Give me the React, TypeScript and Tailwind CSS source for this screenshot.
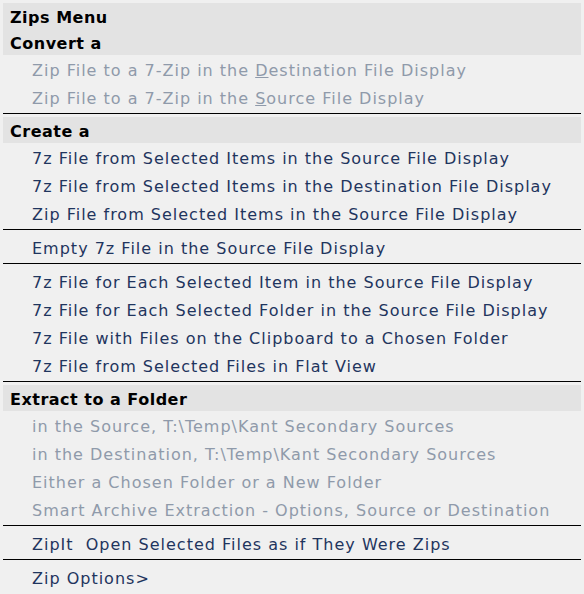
type Item =
  | { kind: 'header'; text: string }
  | { kind: 'item'; text: React.ReactNode; disabled?: boolean }
  | { kind: 'sep' };

const items: Item[] = [
  { kind: 'header', text: 'Zips Menu' },
  { kind: 'header', text: 'Convert a' },
  {
    kind: 'item',
    disabled: true,
    text: (
      <>
        Zip File to a 7-Zip in the <span className="underline">D</span>estination File Display
      </>
    ),
  },
  {
    kind: 'item',
    disabled: true,
    text: (
      <>
        Zip File to a 7-Zip in the <span className="underline">S</span>ource File Display
      </>
    ),
  },
  { kind: 'sep' },
  { kind: 'header', text: 'Create a' },
  { kind: 'item', text: '7z File from Selected Items in the Source File Display' },
  { kind: 'item', text: '7z File from Selected Items in the Destination File Display' },
  { kind: 'item', text: 'Zip File from Selected Items in the Source File Display' },
  { kind: 'sep' },
  { kind: 'item', text: 'Empty 7z File in the Source File Display' },
  { kind: 'sep' },
  { kind: 'item', text: '7z File for Each Selected Item in the Source File Display' },
  { kind: 'item', text: '7z File for Each Selected Folder in the Source File Display' },
  { kind: 'item', text: '7z File with Files on the Clipboard to a Chosen Folder' },
  { kind: 'item', text: '7z File from Selected Files in Flat View' },
  { kind: 'sep' },
  { kind: 'header', text: 'Extract to a Folder' },
  { kind: 'item', disabled: true, text: 'in the Source, T:\\Temp\\Kant Secondary Sources' },
  { kind: 'item', disabled: true, text: 'in the Destination, T:\\Temp\\Kant Secondary Sources' },
  { kind: 'item', disabled: true, text: 'Either a Chosen Folder or a New Folder' },
  { kind: 'item', disabled: true, text: 'Smart Archive Extraction - Options, Source or Destination' },
  { kind: 'sep' },
  { kind: 'item', text: 'ZipIt\u00a0 Open Selected Files as if They Were Zips' },
  { kind: 'sep' },
  { kind: 'item', text: 'Zip Options>' },
];

export default function App() {
  return (
    <div className="w-[584px] h-[594px] bg-[#f0f0f0] pt-[3px] pl-[3px] pr-[3px] font-['DejaVu_Sans',Verdana,sans-serif] text-[16px] overflow-hidden">
      {items.map((it, i) => {
        if (it.kind === 'header') {
          return (
            <div key={i} className="h-[26px] flex items-center pt-[4px] pl-[7px] bg-[#e3e3e3] font-bold tracking-[0.5px] text-black">
              <span>{it.text}</span>
            </div>
          );
        }
        if (it.kind === 'sep') {
          return (
            <div key={i} className="pt-[2px] pb-[3px]">
              <div className="h-px bg-black" />
            </div>
          );
        }
        return (
          <div
            key={i}
            className={`h-[28px] flex items-center pt-[4px] pl-[29px] whitespace-pre tracking-[1px] ${
              it.disabled ? 'text-[#8f9aaa]' : 'text-[#1f355e]'
            }`}
          >
            <span>{it.text}</span>
          </div>
        );
      })}
    </div>
  );
}
